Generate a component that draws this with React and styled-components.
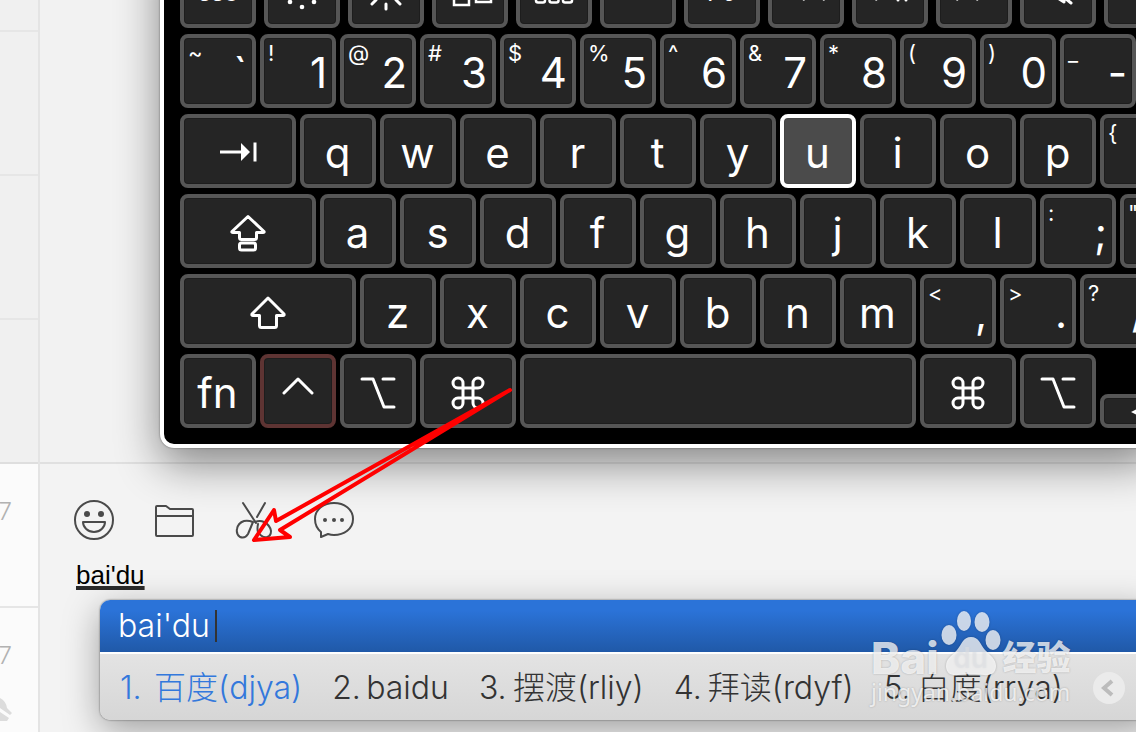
import React from 'react'
import styled, { createGlobalStyle } from 'styled-components'

const GlobalStyle = createGlobalStyle`
  * { box-sizing: border-box; }
  body {
    margin: 0;
    background: #f2f2f2;
    font-family: Inter, "Noto Sans CJK SC", sans-serif;
  }
  button {
    margin: 0;
    padding: 0;
    border: 0;
    background: none;
    font: inherit;
    color: inherit;
  }
  svg { display: block; flex: none; }
`

const Screen = styled.div`
  position: relative;
  display: flex;
  height: 100vh;
  overflow: hidden;
`

/* ---------- conversation list ---------- */

const Sidebar = styled.aside`
  flex: none;
  width: 40px;
  border-right: 2px solid #e4e4e4;
  background: #f0f0f0;
  overflow: hidden;
`

const Chat = styled.div`
  display: flex;
  flex-direction: column;
  justify-content: space-between;
  height: ${p => (p.$cut ? 32 : 144)}px;
  padding: ${p => (p.$light ? '34px 0 28px' : '0')};
  border-bottom: 2px solid ${p => (p.$last ? '#dedede' : '#e6e6e6')};
  background: ${p => (p.$light ? '#fbfbfb' : '#f0f0f0')};
  color: #b2b2b2;
  font-size: 24px;
  font-weight: 300;
  line-height: 28px;
`

const Time = styled.time`
  display: flex;
  justify-content: flex-end;
  width: 12px;
`

/* ---------- right pane ---------- */

const Pane = styled.main`
  display: flex;
  flex: 1;
  flex-direction: column;
  min-width: 0;
`

const Messages = styled.section`
  position: relative;
  z-index: 1;
  display: flex;
  flex: 1;
  flex-direction: column;
  justify-content: flex-end;
  min-height: 0;
  padding: 0 0 14px 120px;
  border-bottom: 2px solid #e0e0e0;
`

const Keyboard = styled.div`
  display: flex;
  flex: none;
  flex-direction: column;
  gap: 6px;
  margin-right: -20px;
  padding: 16px;
  border: 4px solid #fff;
  border-radius: 14px;
  background: #000;
  box-shadow: 0 0 2px rgba(0, 0, 0, 0.5), 0 16px 44px rgba(0, 0, 0, 0.45);
`

const KeyRow = styled.div`
  display: flex;
  align-items: flex-end;
  gap: ${p => (p.$wide ? 8 : 4)}px;
`

const KeyCap = styled.button`
  display: flex;
  flex: none;
  align-items: center;
  justify-content: ${p => (p.$dual ? 'space-between' : 'center')};
  width: ${p => p.$w || 76}px;
  height: ${p => (p.$half ? 34 : 74)}px;
  padding: ${p => (p.$plain ? '0' : '3px 5px 0 4px')};
  border: 4px solid ${p => (p.$on ? '#fff' : p.$hint ? '#5e3433' : '#565656')};
  border-radius: 8px;
  background: ${p => (p.$on ? '#4b4b4b' : '#252525')};
  box-shadow: inset 0 0 0 1px ${p => (p.$on ? '#444' : '#1d1d1d')};
  color: #fff;
  font-size: ${p => (p.$small ? 24 : 42)}px;
  line-height: 48px;
  overflow: hidden;
`

const Shifted = styled.span`
  align-self: flex-start;
  font-size: 22px;
  line-height: 24px;
`

const Stroke = styled.svg`
  fill: none;
  stroke: ${p => p.$color || '#fff'};
  stroke-width: ${p => p.$weight || 3};
  stroke-linecap: round;
  stroke-linejoin: round;
`

const TabIcon = () => (
  <Stroke width="40" height="24" viewBox="0 0 40 24">
    <path d="M2 11h22" strokeLinecap="butt" />
    <path d="M23 2l9 9-9 9z" fill="#fff" stroke="none" />
    <path d="M37 1.500v19" strokeLinecap="butt" />
  </Stroke>
)

const CapsIcon = () => (
  <Stroke width="38" height="38" viewBox="0 0 38 38">
    <path d="M19 2.500L35 17.500q.5 1-1 1H27.500v5q0 2-2 2h-13q-2 0-2-2v-5H4q-1.500 0-1-1z" />
    <rect x="10.500" y="29" width="16" height="7" rx="2" />
  </Stroke>
)

const ShiftIcon = () => (
  <Stroke width="38" height="34" viewBox="0 0 38 34">
    <path d="M19 2L35 18q.5 1.500-1 1.500H27.500v10q0 2-2 2h-13q-2 0-2-2v-10H4q-1.500 0-1-1.500z" />
  </Stroke>
)

const ControlIcon = () => (
  <Stroke width="34" height="32" viewBox="0 0 34 32">
    <path d="M3 16L17 2l14 14" />
  </Stroke>
)

const OptionIcon = () => (
  <Stroke width="36" height="32" viewBox="0 0 36 32">
    <path d="M2 2h11l11 28h10M23 2h11" />
  </Stroke>
)

const CommandIcon = () => (
  <Stroke width="40" height="40" viewBox="0 0 24 24" $weight={1.8}>
    <path d="M15 6v12a3 3 0 1 0 3-3H6a3 3 0 1 0 3 3V6a3 3 0 1 0-3 3h12a3 3 0 1 0-3-3" />
  </Stroke>
)

const FnArt = ({ children }) => (
  <Stroke width="68" height="66" viewBox="0 0 68 66">{children}</Stroke>
)

const DimIcon = () => (
  <FnArt>
    <circle cx="34" cy="33" r="7" />
    <g fill="#fff" stroke="none">
      <circle cx="34" cy="49" r="2.300" /><circle cx="22" cy="44" r="2.300" /><circle cx="46" cy="44" r="2.300" />
      <circle cx="34" cy="17" r="2.300" /><circle cx="22" cy="22" r="2.300" /><circle cx="46" cy="22" r="2.300" />
    </g>
  </FnArt>
)

const BrightIcon = () => (
  <FnArt>
    <circle cx="34" cy="33" r="7" />
    <path d="M34 46v5M44 42l4 4M24 42l-4 4M34 20v-5M44 24l4-4M24 24l-4-4" />
  </FnArt>
)

const MissionIcon = () => (
  <FnArt>
    <path d="M18 24h15v23H18zM40 24h15v20H40z" strokeWidth="2.500" strokeLinejoin="miter" />
  </FnArt>
)

const LaunchIcon = () => (
  <FnArt>
    {[22, 36].map(y => [16, 29.5, 43].map(x => (
      <rect key={x + '-' + y} x={x} y={y} width="9" height="8.500" rx="2" strokeWidth="2.500" />
    )))}
  </FnArt>
)

const BackIcon = () => (
  <FnArt><path d="M32 24v18L16 33zM52 24v18l-16-9z" fill="#fff" strokeWidth="1.500" /></FnArt>
)

const PlayIcon = () => (
  <FnArt>
    <path d="M20 24v18l16-9z" fill="#fff" strokeWidth="1.500" />
    <path d="M42 25v17M50 25v17" />
  </FnArt>
)

const NextIcon = () => (
  <FnArt><path d="M17 24v18l16-9zM37 24v18l16-9z" fill="#fff" strokeWidth="1.500" /></FnArt>
)

const MuteIcon = () => (
  <FnArt><path d="M24 28v9h5l11 7V21l-11 7zM36 36l11 9" /></FnArt>
)

const ArrowLeftIcon = () => (
  <svg width="60" height="20" viewBox="0 0 60 20">
    <path d="M23 11l14-7v14z" fill="#fff" />
  </svg>
)

const numbers = [
  ['~', '`'], ['!', '1'], ['@', '2'], ['#', '3'], ['$', '4'], ['%', '5'], ['^', '6'],
  ['&', '7'], ['*', '8'], ['(', '9'], [')', '0'], ['_', '-'],
]

function Key({ main, shifted, ...rest }) {
  return (
    <KeyCap type="button" $dual={!!shifted} {...rest}>
      {shifted && <Shifted>{shifted}</Shifted>}
      {main && <span>{main}</span>}
    </KeyCap>
  )
}

const IconKey = ({ label, icon, ...rest }) => (
  <KeyCap type="button" aria-label={label} {...rest}>{icon}</KeyCap>
)

function ScreenKeyboard() {
  return (
    <Keyboard>
      <KeyRow $wide>
        <Key main="esc" $small />
        <IconKey label="Brightness down" icon={<DimIcon />} $plain />
        <IconKey label="Brightness up" icon={<BrightIcon />} $plain />
        <IconKey label="Mission Control" icon={<MissionIcon />} $plain />
        <IconKey label="Launchpad" icon={<LaunchIcon />} $plain />
        <IconKey label="F5" $plain />
        <Key main="F6" $small />
        <IconKey label="Previous" icon={<BackIcon />} $plain />
        <IconKey label="Play" icon={<PlayIcon />} $plain />
        <IconKey label="Next" icon={<NextIcon />} $plain />
        <IconKey label="Mute" icon={<MuteIcon />} $plain />
        <IconKey label="Volume down" $plain />
      </KeyRow>
      <KeyRow>
        {numbers.map(([s, m]) => <Key key={m} shifted={s} main={m} />)}
      </KeyRow>
      <KeyRow>
        <IconKey label="Tab" icon={<TabIcon />} $w={116} />
        {'qwertyuiop'.split('').map(c => <Key key={c} main={c} $on={c === 'u'} />)}
        <Key shifted="{" />
      </KeyRow>
      <KeyRow>
        <IconKey label="Caps Lock" icon={<CapsIcon />} $w={136} />
        {'asdfghjkl'.split('').map(c => <Key key={c} main={c} />)}
        <Key shifted=":" main=";" />
        <Key shifted={'"'} />
      </KeyRow>
      <KeyRow>
        <IconKey label="Shift" icon={<ShiftIcon />} $w={176} />
        {'zxcvbnm'.split('').map(c => <Key key={c} main={c} />)}
        <Key shifted="<" main="," />
        <Key shifted=">" main="." />
        <Key shifted="?" main="/" />
      </KeyRow>
      <KeyRow>
        <Key main="fn" />
        <IconKey label="Control" icon={<ControlIcon />} $hint />
        <IconKey label="Option" icon={<OptionIcon />} />
        <IconKey label="Command" icon={<CommandIcon />} $w={96} />
        <IconKey label="Space" $w={396} />
        <IconKey label="Right Command" icon={<CommandIcon />} $w={96} />
        <IconKey label="Right Option" icon={<OptionIcon />} />
        <IconKey label="Left" icon={<ArrowLeftIcon />} $half $plain />
      </KeyRow>
    </Keyboard>
  )
}

/* ---------- composer ---------- */

const Composer = styled.section`
  display: flex;
  flex: none;
  flex-direction: column;
  padding: 36px 0 12px;
  background: #f3f3f3;
`

const Tools = styled.div`
  display: flex;
  gap: 40px;
  padding-left: 34px;
`

const Draft = styled.input`
  margin: 19px 36px 9px;
  padding: 0;
  height: 32px;
  border: 0;
  outline: 0;
  background: none;
  color: #000;
  font-family: "Liberation Sans", Arial, sans-serif;
  font-size: 26px;
  line-height: 32px;
  text-decoration: underline;
  text-decoration-color: #2a2a2a;
  text-decoration-thickness: 4px;
  text-decoration-skip-ink: none;
  text-underline-offset: 2px;
`

const ToolIcon = ({ label, children }) => (
  <button type="button" aria-label={label}>
    <Stroke width="40" height="40" viewBox="0 0 40 40" $color="#4a4a4a" $weight={2}>{children}</Stroke>
  </button>
)

/* ---------- input method window ---------- */

const ImeWindow = styled.div`
  margin: 0 -20px 0 60px;
  border-radius: 10px;
  background: linear-gradient(#eee, #d6d6d6);
  box-shadow: 0 0 2px rgba(0, 0, 0, 0.6), 0 10px 36px rgba(0, 0, 0, 0.35);
  overflow: hidden;
`

const Pinyin = styled.div`
  display: flex;
  align-items: center;
  gap: 5px;
  height: 54px;
  padding: 0 18px;
  border-bottom: 2px solid #fff;
  background: linear-gradient(#2b73d8 20%, #2059a8);
  color: #fff;
  font-family: Inter, "Noto Sans CJK SC", sans-serif;
  font-size: 32px;
  font-weight: 300;
  line-height: 48px;
`

const Caret = styled.i`
  width: 2px;
  height: 32px;
  background: #333;
`

const Candidates = styled.ol`
  display: flex;
  align-items: center;
  gap: 30px;
  height: 66px;
  margin: 0;
  padding: 2px 26px 0 20px;
  list-style: none;
`

const Candidate = styled.button`
  display: flex;
  color: ${p => (p.$first ? '#3378dc' : '#333')};
  font-family: Inter, "Noto Sans CJK SC", sans-serif;
  font-size: 32px;
  font-weight: 300;
  line-height: 40px;
  white-space: nowrap;
`

const Index = styled.span`
  width: 34px;
  text-align: left;
`

const PageButton = styled.button`
  display: flex;
  flex: none;
  align-items: center;
  justify-content: center;
  width: 32px;
  height: 32px;
  border-radius: 50%;
  background: #ebebeb;
`

const words = ['百度(djya)', 'baidu', '摆渡(rliy)', '拜读(rdyf)', '白度(rrya)']

/* ---------- overlays ---------- */

const RedArrow = styled.svg`
  position: absolute;
  left: 240px;
  top: 380px;
  z-index: 3;
  pointer-events: none;
`

const Brand = styled.div`
  position: absolute;
  left: 871px;
  top: 608px;
  z-index: 2;
  display: flex;
  flex-direction: column;
  color: rgba(255, 255, 255, 0.76);
  text-shadow: 0 0 2px rgba(0, 0, 0, 0.25);
  pointer-events: none;
`

const BrandRow = styled.div`
  display: flex;
  align-items: flex-end;
  height: 68px;
  font-family: Inter, "Noto Sans CJK SC", sans-serif;
  font-size: 44px;
  font-weight: 800;
  line-height: 36px;
`

const Paw = styled.div`
  display: grid;
  place-items: end center;
  width: 64px;
  height: 68px;

  > * { grid-area: 1 / 1; }
  > svg { filter: drop-shadow(0 0 1px rgba(0, 0, 0, 0.3)); }
`

const PawText = styled.span`
  color: rgba(150, 165, 190, 0.5);
  font-size: 28px;
  font-weight: 600;
  line-height: 36px;
`

const BrandCn = styled.span`
  font-size: 34px;
  font-weight: 900;
`

const BrandUrl = styled.span`
  font-family: "Noto Sans", sans-serif;
  font-size: 23px;
  line-height: 32px;
`

export default function App() {
  return (
    <Screen>
      <GlobalStyle />
      <Sidebar>
        <Chat $cut />
        <Chat />
        <Chat />
        <Chat $last />
        <Chat $light><Time>7</Time></Chat>
        <Chat $light>
          <Time>7</Time>
          <svg width="14" height="26" viewBox="0 0 14 26">
            <path d="M0 2q6 3 7 10l5 5-2 2L0 12zM0 16l9 6-2 3H0z" fill="#dcdcdc" />
          </svg>
        </Chat>
      </Sidebar>

      <Pane>
        <Messages>
          <ScreenKeyboard />
        </Messages>
        <Composer>
          <Tools>
            <ToolIcon label="Emoji">
              <circle cx="20" cy="20" r="19" />
              <path d="M9 22h22a11 10 0 0 1-22 0z" />
              <circle cx="13" cy="14" r="3" fill="#4a4a4a" stroke="none" />
              <circle cx="27" cy="14" r="3" fill="#4a4a4a" stroke="none" />
            </ToolIcon>
            <ToolIcon label="Files">
              <path d="M2 35V7q0-1 1-1h9l4 3h22q1 0 1 1v25q0 1-1 1H3q-1 0-1-1zM2 16h37" />
            </ToolIcon>
            <ToolIcon label="Screenshot">
              <path d="M9 3l13 20M31 3l-8 14" />
              <path d="M19 22q-5-2-9-1-6 2-7 8-1 5 3 8 5 2 8-3zM21 22q5-2 9 0 6 3 7 9 0 5-4 6-5 1-9-5-1-3 0-8" />
            </ToolIcon>
            <ToolIcon label="History">
              <path d="M7 32q-6-5-6-13C1 9 10 3 20 3s19 6 19 16-9 16-19 16q-3 0-6-1l-7 3z" />
              <g fill="#4a4a4a" stroke="none">
                <circle cx="11" cy="20" r="2" /><circle cx="20" cy="20" r="2" /><circle cx="28" cy="20" r="2" />
              </g>
            </ToolIcon>
          </Tools>
          <Draft aria-label="Message" defaultValue="bai'du" spellCheck={false} />
          <ImeWindow>
            <Pinyin>bai'du<Caret /></Pinyin>
            <Candidates>
              {words.map((w, i) => (
                <li key={w}>
                  <Candidate type="button" $first={i === 0}>
                    <Index>{i + 1}.</Index>
                    <span>{w}</span>
                  </Candidate>
                </li>
              ))}
              <li>
                <PageButton type="button" aria-label="Previous page">
                  <Stroke width="16" height="20" viewBox="0 0 16 20" $color="#bcbcbc" $weight={4}>
                    <path d="M11 3l-8 7 8 7" strokeLinecap="butt" strokeLinejoin="miter" />
                  </Stroke>
                </PageButton>
              </li>
            </Candidates>
          </ImeWindow>
        </Composer>
      </Pane>

      <Brand>
        <BrandRow>
          <span>Bai</span>
          <Paw>
            <svg width="64" height="68" viewBox="-1 0 64 68" fill="currentColor">
              <ellipse cx="9" cy="27" rx="7.500" ry="10" />
              <ellipse cx="24" cy="13" rx="7" ry="10" />
              <ellipse cx="42" cy="14" rx="7.500" ry="10" />
              <ellipse cx="53" cy="32" rx="7.500" ry="10" />
              <path d="M31 29c8 0 9 7 14 13 5 5 11 9 11 16 0 8-7 10-12 9-8-1-18-1-26 0-7 1-12-2-12-9 0-8 7-11 11-16 5-6 6-13 14-13z" />
            </svg>
            <PawText>du</PawText>
          </Paw>
          <BrandCn>经验</BrandCn>
        </BrandRow>
        <BrandUrl>jingyan.baidu.com</BrandUrl>
      </Brand>

      <RedArrow width="280" height="170" viewBox="240 380 280 170">
        <path
          d="M510 390L276 521l-2-11-20 30 36-3-10-7z"
          fill="none" stroke="#f00" strokeWidth="4" strokeLinejoin="round"
        />
      </RedArrow>
    </Screen>
  )
}
